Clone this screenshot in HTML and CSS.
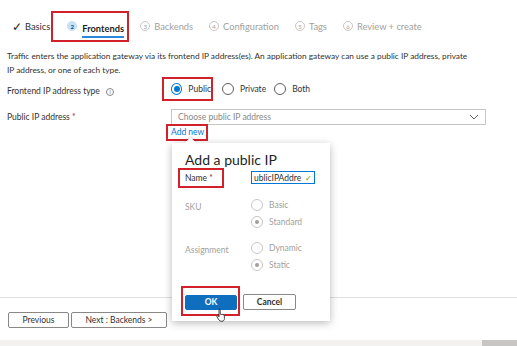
FILE: index.html
```html
<!DOCTYPE html>
<html lang="en">
<head>
  <meta charset="UTF-8" />
  <title>Create application gateway - Frontends</title>
  <link rel="stylesheet" href="styles.css">
</head>
<body>

<nav class="tabs">
  <div class="tab done"><span class="check">&#10003;</span>Basics</div>
  <div class="tab active mark"><span class="step">2</span><span class="tab-label">Frontends</span></div>
  <div class="tab"><span class="step">3</span>Backends</div>
  <div class="tab"><span class="step">4</span>Configuration</div>
  <div class="tab"><span class="step">5</span>Tags</div>
  <div class="tab"><span class="step">6</span>Review + create</div>
</nav>

<main class="content">
  <p class="desc">Traffic enters the application gateway via its frontend IP address(es). An application gateway can use a public IP address, private<br>IP address, or one of each type.</p>

  <div class="row row-type">
    <div class="label">Frontend IP address type <span class="info">i</span></div>
    <div class="radios">
      <label class="radio mark"><span class="dot on"></span>Public</label>
      <label class="radio"><span class="dot"></span>Private</label>
      <label class="radio"><span class="dot"></span>Both</label>
    </div>
  </div>

  <div class="row row-ip">
    <div class="label">Public IP address <span class="req">*</span></div>
    <div class="field">
      <div class="select">
        <span>Choose public IP address</span>
        <svg class="chev" width="10" height="6" viewBox="0 0 10 6"><path d="M1 1l4 4 4-4" fill="none" stroke="#605e5c" stroke-width="1"/></svg>
      </div>
      <a class="add-new mark">Add new</a>
    </div>
  </div>
</main>

<footer class="footer">
  <button class="btn">Previous</button>
  <button class="btn">Next : Backends &gt;</button>
</footer>

<div class="strip"><div class="strip-end"></div></div>

<div class="callout">
  <span class="notch"></span>
  <h3>Add a public IP</h3>
  <div class="c-row">
    <div class="c-label name mark">Name <span class="req">*</span></div>
    <div class="name-input"><span>ublicIPAddre</span><span class="ok-check">&#10003;</span></div>
  </div>
  <div class="c-row c-group">
    <div class="c-label muted">SKU</div>
    <div class="c-opts">
      <div class="radio off"><span class="dot"></span>Basic</div>
      <div class="radio off"><span class="dot on"></span>Standard</div>
    </div>
  </div>
  <div class="c-row c-group">
    <div class="c-label muted">Assignment</div>
    <div class="c-opts">
      <div class="radio off"><span class="dot"></span>Dynamic</div>
      <div class="radio off"><span class="dot on"></span>Static</div>
    </div>
  </div>
  <div class="c-actions">
    <span class="mark ok-wrap"><button class="btn primary">OK</button></span>
    <button class="btn">Cancel</button>
  </div>
  <svg class="cursor" width="11" height="14" viewBox="0 0 12 15">
    <path d="M3.5 1.2c.7 0 1.1.5 1.1 1.1v4.4l.1-.1c.5-.3 1.2-.1 1.4.4.5-.4 1.3-.2 1.5.3.5-.3 1.3 0 1.4.6l.2 3.6c0 1.5-1 2.8-2.6 2.8H5.5c-.9 0-1.6-.4-2.1-1.1L1.2 9.7c-.4-.5-.2-1.1.3-1.3.4-.2.9-.1 1.2.3l.6.8V2.3c0-.6.4-1.1 1.1-1.1z" fill="#fff" stroke="#222" stroke-width=".9"/>
  </svg>
</div>

</body>
</html>
```

FILE: styles.css
```css
* { box-sizing: border-box; }

body {
  margin: 0;
  width: 517px;
  height: 346px;
  overflow: hidden;
  position: relative;
  font-family: "Lato", "Open Sans", sans-serif;
  font-size: 8.5px;
  color: #323130;
  background: #fff;
}

.mark {
  outline: 2px solid #d3212c;
}

/* tabs */
.tabs {
  display: flex;
  align-items: center;
  height: 40px;
  padding: 12px 0 0 12px;
  font-size: 9.3px;
  color: #a19f9d;
  white-space: nowrap;
}

.tab {
  display: flex;
  align-items: center;
  height: 26px;
  margin-right: 16px;
}

.tab.done {
  color: #323130;
  margin-right: 3px;
}

.check {
  font-size: 12px;
  margin-right: 3px;
  color: #222;
}

.tab.active {
  color: #201f1e;
  font-weight: 700;
  padding: 0 3px 0 14px;
  height: 27px;
  width: 74px;
  margin-right: 13px;
}

.tab-label {
  border-bottom: 2px solid #2b88d8;
  padding: 5px 0 2px;
  margin-top: 3px;
}

.step {
  display: inline-flex;
  align-items: center;
  justify-content: center;
  width: 10px;
  height: 10px;
  border: 1px solid #c8c6c4;
  border-radius: 50%;
  font-size: 6px;
  margin-right: 4px;
}

.tab.active .step {
  background: #c7e0f4;
  border-color: #c7e0f4;
  color: #005a9e;
  margin-right: 5px;
}

/* content */
.content {
  padding: 0 7px;
}

.desc {
  margin: 9px 0 0;
  line-height: 14px;
  font-size: 8.3px;
  color: #323130;
  white-space: nowrap;
}

.row {
  display: grid;
  grid-template-columns: 164px 1fr;
}

.row-type {
  align-items: center;
  height: 24px;
}

.row-type .label {
  margin-top: 4px;
}

.info {
  display: inline-flex;
  align-items: center;
  justify-content: center;
  width: 8px;
  height: 8px;
  border: 1px solid #8a8886;
  border-radius: 50%;
  font-size: 5px;
  color: #605e5c;
  margin-left: 4px;
  vertical-align: middle;
}

.radios {
  display: flex;
  align-items: center;
}

.radio {
  display: flex;
  align-items: center;
  margin-right: 8px;
  color: #323130;
}

.radios .radio.mark {
  margin-left: -7px;
  padding: 4px 0 4px 7px;
  width: 47px;
  margin-right: 11px;
}

.dot {
  width: 12px;
  height: 12px;
  border: 1px solid #605e5c;
  border-radius: 50%;
  margin-right: 6px;
  position: relative;
  background: #fff;
}

.dot.on {
  border-color: #0078d4;
}

.dot.on::after {
  content: "";
  position: absolute;
  left: 2px;
  top: 2px;
  width: 6px;
  height: 6px;
  border-radius: 50%;
  background: #0078d4;
}

.row-ip {
  margin-top: 8px;
}

.row-ip .label {
  padding-top: 3px;
}

.req {
  color: #a4262c;
}

.select {
  display: flex;
  align-items: center;
  justify-content: space-between;
  height: 16px;
  width: 315px;
  border: 1px solid #c8c6c4;
  padding: 0 6px;
  color: #8a8886;
}

.add-new {
  display: inline-block;
  color: #0078d4;
  margin-left: -3px;
  padding: 1px 2px 2px 3px;
  margin-top: 1px;
}

/* footer */
.footer {
  position: absolute;
  left: 0;
  top: 297px;
  width: 100%;
  border-top: 1px solid #e1dfdd;
  padding: 14px 0 0 8px;
  display: flex;
  gap: 2px;
}

.btn {
  font-family: inherit;
  font-size: 8.5px;
  height: 16px;
  padding: 0 6px;
  background: #fff;
  border: 1px solid #8a8886;
  border-radius: 2px;
  color: #323130;
  line-height: 1;
  white-space: nowrap;
}

.footer .btn:first-child {
  width: 61px;
}

.footer .btn:last-child {
  width: 96px;
}

.strip {
  position: absolute;
  left: 0;
  bottom: 0;
  width: 100%;
  height: 6px;
  background: #f3f2f1;
}

.strip-end {
  margin-left: 482px;
  height: 100%;
  background: #c8c6c4;
}

/* callout */
.callout {
  position: absolute;
  left: 172px;
  top: 143px;
  width: 158px;
  height: 178px;
  background: #fff;
  box-shadow: 0 2px 8px rgba(0, 0, 0, 0.28);
  padding: 8px 0 0 13px;
}

.notch {
  position: absolute;
  left: 14px;
  top: -4px;
  width: 9px;
  height: 9px;
  background: #fff;
  transform: rotate(45deg);
  box-shadow: -1px -1px 2px rgba(0, 0, 0, 0.12);
}

.callout h3 {
  margin: 0;
  font-size: 14px;
  font-weight: 400;
  color: #201f1e;
  line-height: 18px;
  position: relative;
}

.c-row {
  display: grid;
  grid-template-columns: 66px 1fr;
  align-items: center;
}

.c-label.name {
  margin: 1px 0 0 -5px;
  padding: 3px 0 3px 5px;
  width: 42px;
  color: #323130;
}

.name-input {
  display: flex;
  align-items: center;
  width: 64px;
  height: 13px;
  border: 1px solid #0078d4;
  padding: 0 2px;
  color: #323130;
  overflow: hidden;
  white-space: nowrap;
}

.ok-check {
  color: #57a300;
  font-size: 8px;
  margin-left: auto;
}

.muted {
  color: #a19f9d;
}

.c-group {
  align-items: start;
  margin-top: 13px;
}

.c-group .c-label {
  padding-top: 3px;
}

.c-group + .c-group {
  margin-top: 14px;
}

.c-opts {
  display: flex;
  flex-direction: column;
  gap: 5px;
}

.radio.off {
  color: #a19f9d;
}

.radio.off .dot {
  border-color: #c8c6c4;
}

.radio.off .dot.on::after {
  background: #a19f9d;
  width: 4px;
  height: 4px;
  left: 3px;
  top: 3px;
}

.c-actions {
  display: flex;
  align-items: flex-start;
  margin-top: 17px;
  gap: 5px;
}

.ok-wrap {
  display: flex;
  padding: 7px 1px 4px 2px;
  margin-left: -2px;
}

.btn.primary {
  width: 52px;
  height: 15px;
  background: #106ebe;
  border-color: #106ebe;
  color: #fff;
  font-weight: 700;
}

.c-actions > .btn {
  width: 53px;
  margin-top: 6px;
  font-weight: 700;
}

.cursor {
  position: absolute;
  left: 44px;
  top: 165px;
}
```
